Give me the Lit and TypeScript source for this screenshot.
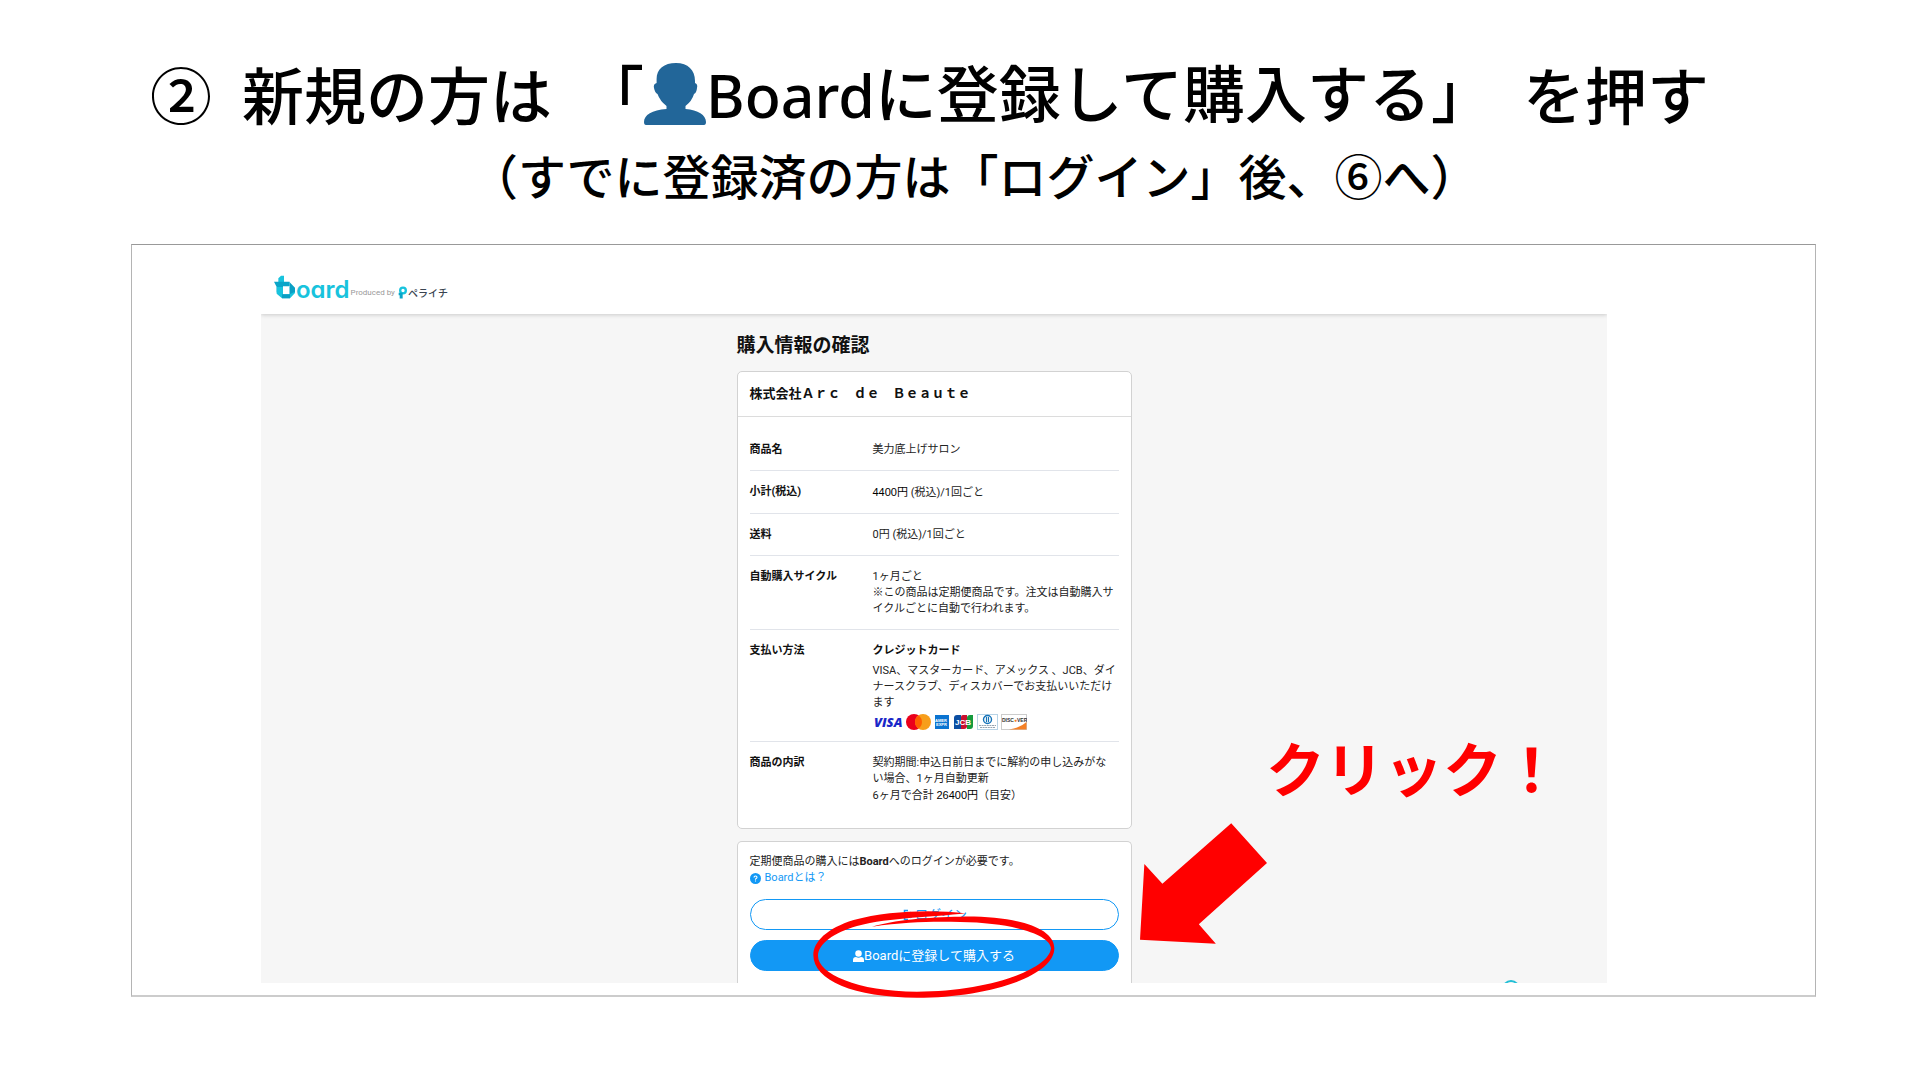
import { LitElement, html, css } from "lit";
import { customElement } from "lit/decorators.js";

@customElement("board-header")
class BoardHeader extends LitElement {
  static styles = css`
    :host {
      display: block;
      position: relative;
      z-index: 1;
      background: #fff;
      box-shadow: 0 1px 4px rgba(0, 0, 0, 0.18);
      clip-path: inset(0 0 -6px 0);
    }
    .bar {
      box-sizing: border-box;
      display: flex;
      align-items: flex-end;
      height: 53px;
      padding: 0 13px 15px;
    }
    .mark {
      width: 22px;
      height: 24px;
    }
    .word {
      font: 600 24px/24px Inter, sans-serif;
      font-feature-settings: "cv11";
      color: #18c3dd;
      margin-bottom: -3px;
    }
    .by {
      font: 8px/8px Roboto, sans-serif;
      color: #999;
      margin: 0 3px 2px 1px;
    }
    .peraichi-mark {
      width: 9px;
      height: 13px;
    }
    .peraichi {
      font: 500 10px/12px "Noto Sans CJK JP", sans-serif;
      color: #3a4450;
      margin-left: 1px;
    }
  `;
  render() {
    return html`<header class="bar">
      <svg class="mark" viewBox="0 0 66 72" aria-hidden="true">
        <path fill="#18c3dd" d="M13 10 21 2h9v20H13z" />
        <path fill="#0aa5c8" d="M0 20h47v14H27v14l-10 14L8 52V36z" />
        <path fill="#18c3dd" d="M8 36h19v22h20V35l16 8v11L48 70H24L8 56z" />
        <path fill="#0a9fc4" d="M47 22 63 38v12L47 58zM24 58h24v12H24z" />
      </svg>
      <span class="word">oard</span>
      <span class="by">Produced by</span>
      <svg class="peraichi-mark" viewBox="0 0 27 38" aria-hidden="true">
        <circle cx="15" cy="13" r="8.500" fill="none" stroke="#18c3dd" stroke-width="7" />
        <path fill="#0aa5c8" d="M2 20h12v17H5V27H2z" />
      </svg>
      <span class="peraichi">ペライチ</span>
    </header>`;
  }
}

@customElement("card-brands")
class CardBrands extends LitElement {
  static styles = css`
    :host {
      display: block;
      height: 16px;
    }
    .brands {
      display: block;
      width: 154px;
      height: 16px;
    }
    .visa {
      font: italic 800 13px "Open Sans", sans-serif;
    }
    .jcb {
      font: 700 8px "Liberation Sans", sans-serif;
    }
    .tiny {
      font: 700 4px "Liberation Sans", sans-serif;
    }
    .disc {
      font: 700 5px "Liberation Sans", sans-serif;
    }
  `;
  render() {
    return html`<svg class="brands" viewBox="0 0 154 16" role="img" aria-label="VISA Mastercard American Express JCB Diners Club Discover">
      <text class="visa" x="1" y="13" fill="#1a27c8">VISA</text>
      <circle cx="41" cy="8" r="8" fill="#eb001b" />
      <circle cx="50" cy="8" r="8" fill="#f79e1b" />
      <path d="M45.500 1.400a8 8 0 0 1 0 13.200a8 8 0 0 1 0-13.200z" fill="#ff5f00" />
      <rect x="62" y="1" width="14" height="14" fill="#0b74d1" />
      <text class="tiny" x="62" y="8" fill="#fff">AMER</text>
      <text class="tiny" x="63" y="12" fill="#fff">EXPR</text>
      <path d="M84 1h4v14h-7V4a3 3 0 0 1 3-3z" fill="#0b4ea2" />
      <path d="M90 1h4v11a3 3 0 0 1-3 3h-3V3a2 2 0 0 1 2-2z" fill="#c8102e" />
      <path d="M97 1h3v11a3 3 0 0 1-3 3h-3V4a3 3 0 0 1 3-3z" fill="#159a3c" />
      <text class="jcb" x="82" y="11" fill="#fff">JCB</text>
      <rect x="104.500" y="0.500" width="20" height="15" fill="#fff" stroke="#b8d3e6" />
      <circle cx="114.500" cy="5.500" r="4" fill="#fff" stroke="#1573b8" stroke-width="1.400" />
      <path d="M113.500 3v5M115.500 3v5" stroke="#1573b8" stroke-width="1.200" />
      <path d="M106 11.500h17M107 13.500h15" stroke="#8a9aa8" stroke-dasharray="2 .6" stroke-width=".9" />
      <rect x="128.500" y="0.500" width="25" height="15" fill="#fff" stroke="#ccc" />
      <path d="M153.500 8v7.500H136q11-1.500 17.500-7.500z" fill="#f58025" />
      <text class="disc" x="129" y="8" fill="#333">DISC<tspan fill="#f58025">●</tspan>VER</text>
    </svg>`;
  }
}

@customElement("purchase-page")
class PurchasePage extends LitElement {
  static styles = css`
    :host {
      display: block;
      font: 11px/16px Roboto, "Noto Sans CJK JP", sans-serif;
      color: #222;
    }
    .body {
      position: relative;
      overflow: hidden;
      background: #f6f6f6;
      padding-top: 18px;
    }
    .column {
      box-sizing: border-box;
      max-width: 395px;
      margin: 0 auto;
    }
    .heading {
      font-size: 19px;
      line-height: 28px;
      font-weight: 700;
      color: #111;
      margin: 0 0 11px;
    }
    .card {
      background: #fff;
      border: 1px solid #d2d2d2;
      border-radius: 5px;
    }
    .shop {
      font-size: 13px;
      line-height: 20px;
      font-weight: 700;
      color: #111;
      margin: 0;
      padding: 12px;
      border-bottom: 1px solid #dcdcdc;
    }
    .detail {
      padding: 12px;
    }
    .table {
      width: 100%;
      border-spacing: 0;
    }
    .table th,
    .table td {
      vertical-align: top;
      text-align: left;
      padding: 13px 0 12px;
      border-bottom: 1px solid #e1e4ea;
    }
    .table tr:last-child > * {
      border-bottom: 0;
    }
    .table th {
      width: 123px;
      color: #111;
    }
    .stamp {
      color: #000;
      font-family: "Liberation Sans", "Noto Sans CJK JP", sans-serif;
    }
    .method {
      margin: 0 0 4px;
      font-weight: 700;
      color: #111;
    }
    .brands {
      margin-top: 3px;
      margin-bottom: -1px;
    }
    .login {
      margin-top: 12px;
      padding: 12px;
      border-bottom: 0;
      border-radius: 5px 5px 0 0;
    }
    .note {
      margin: 0;
    }
    .about {
      display: flex;
      align-items: center;
      gap: 4px;
      color: #1298f5;
      text-decoration: none;
      margin-bottom: 13px;
    }
    .help {
      width: 11px;
      height: 11px;
    }
    .btn {
      display: flex;
      align-items: center;
      justify-content: center;
      width: 100%;
      height: 31px;
      padding: 0;
      border: 1px solid #1298f5;
      border-radius: 16px;
      background: #fff;
      color: #1298f5;
      font: inherit;
      font-size: 13px;
    }
    .primary {
      margin-top: 10px;
      background: #1298f5;
      color: #fff;
    }
    .user {
      width: 11px;
      height: 12px;
    }
    .enter {
      width: 14px;
      height: 12px;
    }
    .chat {
      position: absolute;
      right: 82px;
      bottom: -14px;
      width: 28px;
      height: 18px;
    }
  `;
  render() {
    return html`<board-header></board-header>
      <main class="body">
        <div class="column">
          <h2 class="heading">購入情報の確認</h2>
          <section class="card">
            <h3 class="shop">株式会社Ａｒｃ　ｄｅ　Ｂｅａｕｔｅ</h3>
            <div class="detail">
              <table class="table">
                <tbody>
                  <tr><th scope="row">商品名</th><td>美力底上げサロン</td></tr>
                  <tr><th scope="row">小計(税込)</th><td><span class="stamp">4400円</span> (税込)/1回ごと</td></tr>
                  <tr><th scope="row">送料</th><td>0円 (税込)/1回ごと</td></tr>
                  <tr>
                    <th scope="row">自動購入サイクル</th>
                    <td>1ヶ月ごと<br />※この商品は定期便商品です。注文は自動購入サ<br />イクルごとに自動で行われます。</td>
                  </tr>
                  <tr>
                    <th scope="row">支払い方法</th>
                    <td>
                      <p class="method">クレジットカード</p>
                      VISA、マスターカード、アメックス 、JCB、ダイ<br />ナースクラブ、ディスカバーでお支払いいただけ<br />ます
                      <card-brands class="brands"></card-brands>
                    </td>
                  </tr>
                  <tr>
                    <th scope="row">商品の内訳</th>
                    <td>契約期間:申込日前日までに解約の申し込みがな<br />い場合、1ヶ月自動更新<br />6ヶ月で合計 <span class="stamp">26400円</span>（目安）</td>
                  </tr>
                </tbody>
              </table>
            </div>
          </section>
          <section class="card login">
            <p class="note">定期便商品の購入には<b>Board</b>へのログインが必要です。</p>
            <a class="about" href="#about">
              <svg class="help" viewBox="0 0 22 22" aria-hidden="true">
                <circle cx="11" cy="11" r="11" fill="#1298f5" />
                <path d="M8 9q0-3 3-3t3 2.500q0 2-3 3.500v1.500M11 15v2.200" fill="none" stroke="#fff" stroke-width="2.200" />
              </svg>
              Boardとは？
            </a>
            <button class="btn" type="button">
              <svg class="enter" viewBox="0 0 28 24" aria-hidden="true">
                <path d="M14 3H7v18h7" fill="none" stroke="#1298f5" stroke-width="3" />
                <path d="M13 10h6V5l8 7-8 7v-5h-6z" fill="#1298f5" />
              </svg>
              ログイン
            </button>
            <button class="btn primary" type="button">
              <svg class="user" viewBox="0 0 22 24" aria-hidden="true">
                <circle cx="11" cy="7" r="6.500" fill="#fff" />
                <path d="M0 24v-4q0-6 6-6 5 2.500 10 0 6 0 6 6v4z" fill="#fff" />
              </svg>
              Boardに登録して購入する
            </button>
          </section>
        </div>
        <svg class="chat" viewBox="0 0 28 18" aria-hidden="true">
          <circle cx="14" cy="10" r="8" fill="none" stroke="#22bfd6" stroke-width="2" />
        </svg>
      </main>`;
  }
}

@customElement("app-root")
class AppRoot extends LitElement {
  static styles = css`
    :host {
      display: block;
      min-height: 100vh;
      background: #fff;
      color: #000;
      font-family: "Noto Sans CJK JP", sans-serif;
    }
    .slide {
      padding: 46px 104px 80px 131px;
    }
    .title {
      display: flex;
      align-items: center;
      gap: 30px;
      margin: 0 0 0 19px;
      font-size: 62px;
      line-height: 90px;
      font-weight: 500;
      white-space: nowrap;
    }
    .person {
      width: 62px;
      height: 62px;
      vertical-align: -7px;
    }
    .latin {
      font-family: "Noto Sans", sans-serif;
      font-size: 59px;
    }
    .subtitle {
      margin: 4px 0 40px 339px;
      font-size: 48px;
      line-height: 60px;
      font-weight: 500;
      white-space: nowrap;
    }
    .frame {
      border: 1px solid #b4b4b4;
      border-top-color: #999;
      border-bottom: 2px solid #ccc;
      padding: 16px 208px 12px 129px;
    }
    .shot {
      position: relative;
    }
    .shout {
      position: absolute;
      left: calc(50% + 332px);
      top: 461px;
      margin: 0;
      font-size: 59px;
      line-height: 90px;
      font-weight: 700;
      color: #f00;
      white-space: nowrap;
    }
    .arrow {
      position: absolute;
      left: calc(50% + 206px);
      top: 562px;
      width: 127px;
      height: 121px;
    }
    .ring {
      position: absolute;
      left: calc(50% - 122px);
      top: 648px;
      width: 244px;
      height: 90px;
    }
  `;
  render() {
    return html`<div class="slide">
      <h1 class="title">
        <span>②</span>
        <span>新規の方は</span>
        <span
          >「<svg class="person" viewBox="0 0 62 62" aria-hidden="true">
            <path
              fill="#226699"
              d="M32 0C44 0 51 7 51 18v2q3 1 2 5-.5 5-3 6-2 7-8.500 12v3C54 47 62 52 62 59q0 3-2 3H2q-2 0-2-3c0-7 8-12 22.500-13v-3Q16 38 13.500 31 11 30 10 25q-1-4 2.600-5v-4C12.600 6 20 0 32 0z"
            /></svg
          ><span class="latin">Board</span>に登録して購入する」</span
        >
        <span>を押す</span>
      </h1>
      <p class="subtitle">（すでに登録済の方は「ログイン」後、⑥へ）</p>
      <div class="frame">
        <div class="shot">
          <purchase-page></purchase-page>
          <p class="shout">クリック！</p>
          <svg class="arrow" viewBox="60 309 380 360" aria-hidden="true">
            <path fill="#f00" d="M333 309 440 428 236 611 287 669 60 657 73 431 127 490z" />
          </svg>
          <svg class="ring" viewBox="275 267 732 270" aria-hidden="true">
            <path
              fill="#f00"
              d="M735 280C640 268 500 272 400 300 320 325 279 365 279 405 279 480 400 533 590 533 800 533 1002 470 1002 385 1002 320 880 287 720 290 620 291 520 300 455 320 560 305 640 304 720 306 880 308 990 345 992 385 985 450 800 515 590 515 410 515 293 460 293 408 293 372 340 338 410 318 510 292 640 292 735 280z"
            />
          </svg>
        </div>
      </div>
    </div>`;
  }
}
